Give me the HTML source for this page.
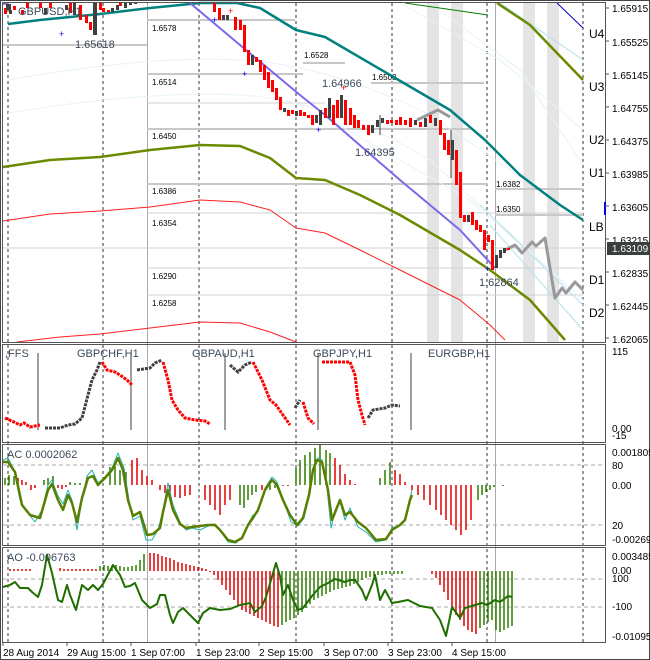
<!DOCTYPE html>
<html><head><meta charset="utf-8"><style>
body{margin:0;background:#fff;width:650px;height:660px;overflow:hidden}
svg{display:block;font-family:"Liberation Sans",sans-serif}
.ax{font-size:10px;fill:#000}
.sm{font-size:8px;fill:#000}
.lb{font-size:11px;fill:#3c4a5a}
</style></head><body>
<svg width="650" height="660" viewBox="0 0 650 660" xmlns="http://www.w3.org/2000/svg">
<rect x="0.5" y="0.5" width="649" height="659" fill="#fff" stroke="#444"/>
<g fill="#e4e4e4">
<rect x="427" y="3" width="12" height="339"/><rect x="451" y="3" width="12" height="339"/>
<rect x="523" y="3" width="12" height="339"/><rect x="547" y="3" width="12" height="339"/>
</g>
<g stroke="#333" stroke-dasharray="3,3" stroke-width="1">
<path d="M8 3V642M103 3V642M199 3V642M296 3V642M392 3V642M487 3V642M583 3V642"/>
</g>
<g stroke="#aaa" stroke-width="1"><path d="M147.5 3V642M495.5 3V642"/></g>
<g stroke="#c8c8c8" stroke-width="2">
<path d="M3 45H147M147 20H295M147 74H303M147 129H470M147 184H488M303 63H345M371 83H484M495 189H583M495 215H583"/>
</g>
<g stroke="#d0d0d0" stroke-width="1"><path d="M147 103H325M147 213H583M147 268H583M147 295H583M3 248H605"/></g>
<g class="sm">
<text x="152" y="31">1.6578</text><text x="152" y="85">1.6514</text><text x="152" y="139">1.6450</text>
<text x="152" y="194">1.6386</text><text x="152" y="226">1.6354</text><text x="152" y="279">1.6290</text>
<text x="152" y="306">1.6258</text><text x="304" y="58">1.6528</text><text x="372" y="80">1.6503</text>
<text x="496" y="187">1.6382</text><text x="496" y="212">1.6350</text>
</g>
<g fill="none" stroke="#e6f3f7" stroke-width="1">
<path d="M8 80Q150 55 240 60T430 115L583 220"/>
<path d="M8 113Q150 90 240 95T430 160L583 300"/>
<path d="M330 120L470 200L583 300"/>
<path d="M400 3L500 60L583 130"/>
<path d="M430 3L520 70L583 165"/>
</g>
<g fill="none" stroke="#b5e0ea" stroke-width="1"><path d="M480 205L583 305M490 225L583 330M500 3L583 60"/></g>
<g fill="none" stroke-linejoin="round">
<path d="M8 24L40 20L100 14L150 8L200 3L237 3L260 8L296 30L325 37L390 75L450 110L485 140L520 175L560 205L583 220" stroke="#008080" stroke-width="2.5"/>
<path d="M3 167L50 160L100 157L150 150L200 145L240 146L270 158L296 178L325 180L360 195L400 215L460 250L490 270L530 300L565 340" stroke="#6b8a00" stroke-width="2.5"/>
<path d="M497 3L530 25L583 80" stroke="#6b8a00" stroke-width="2.5"/>
<path d="M3 221L50 214L100 211L150 207L200 200L240 202L270 210L296 228L325 233L360 250L400 270L460 300L490 325L505 340" stroke="#ff2020" stroke-width="1"/>
<path d="M17 342L60 337L100 334L150 328L200 322L240 323L270 332L296 342" stroke="#ff2020" stroke-width="1"/>
<path d="M405 3L488 15" stroke="#008000" stroke-width="1"/>
<path d="M557 3L583 28" stroke="#0000cc" stroke-width="1"/>
<path d="M190 3L240 45L300 95L325 115L400 180L460 230L495 268" stroke="#7b68ee" stroke-width="2"/>
<path d="M3 4L8 3" stroke="#7b68ee" stroke-width="2"/>
<path d="M417 120L438 110L450 117" stroke="#999" stroke-width="3"/>
<path d="M505 250L515 245L522 253L532 242L536 246L545 238L555 298L562 288L566 293L575 282L583 290" stroke="#999" stroke-width="3"/>
</g>
<g fill="#ff0000">
<rect x="4" y="8" width="3" height="6"/><rect x="13" y="6" width="3" height="4"/><rect x="21" y="10" width="3" height="4"/><rect x="26" y="3" width="3" height="5"/><rect x="39" y="3" width="3" height="5"/><rect x="49" y="3" width="3" height="5"/><rect x="69" y="3" width="3" height="10"/><rect x="79" y="5" width="3" height="15"/><rect x="85" y="15" width="3" height="8"/><rect x="89" y="22" width="3" height="8"/><rect x="99" y="3" width="3" height="7"/><rect x="102" y="8" width="3" height="4"/><rect x="107" y="10" width="3" height="2"/><rect x="119" y="3" width="3" height="3"/>
<rect x="213" y="3" width="3" height="9"/><rect x="218" y="8" width="3" height="12"/><rect x="234" y="17" width="3" height="13"/><rect x="239" y="20" width="3" height="10"/><rect x="243" y="25" width="3" height="27"/><rect x="247" y="50" width="3" height="15"/><rect x="255" y="57" width="3" height="5"/><rect x="259" y="60" width="3" height="12"/><rect x="263" y="65" width="3" height="15"/><rect x="267" y="72" width="3" height="16"/><rect x="271" y="80" width="3" height="12"/><rect x="275" y="88" width="3" height="12"/><rect x="279" y="97" width="3" height="13"/><rect x="287" y="110" width="3" height="6"/><rect x="291" y="110" width="3" height="4"/><rect x="299" y="110" width="3" height="6"/><rect x="303" y="112" width="3" height="4"/><rect x="307" y="115" width="3" height="3"/><rect x="311" y="115" width="3" height="10"/><rect x="324" y="108" width="3" height="10"/><rect x="332" y="105" width="3" height="20"/><rect x="336" y="100" width="3" height="18"/><rect x="344" y="100" width="3" height="25"/><rect x="349" y="108" width="3" height="17"/><rect x="353" y="115" width="3" height="13"/><rect x="357" y="120" width="3" height="8"/><rect x="362" y="125" width="3" height="5"/><rect x="367" y="125" width="3" height="10"/><rect x="386" y="120" width="3" height="4"/><rect x="390" y="120" width="3" height="3"/><rect x="395" y="120" width="3" height="5"/><rect x="399" y="117" width="3" height="8"/><rect x="404" y="120" width="3" height="5"/><rect x="409" y="118" width="3" height="9"/><rect x="419" y="122" width="3" height="5"/><rect x="429" y="115" width="3" height="8"/><rect x="439" y="120" width="3" height="15"/><rect x="443" y="133" width="3" height="17"/><rect x="447" y="140" width="3" height="15"/><rect x="455" y="150" width="3" height="35"/><rect x="459" y="172" width="3" height="46"/><rect x="463" y="215" width="3" height="7"/><rect x="471" y="212" width="3" height="13"/><rect x="475" y="220" width="3" height="10"/><rect x="479" y="225" width="3" height="7"/><rect x="483" y="230" width="3" height="20"/><rect x="487" y="235" width="3" height="7"/><rect x="491" y="240" width="3" height="30"/><rect x="507" y="248" width="3" height="2"/>
</g>
<g fill="#404040">
<rect x="9" y="10" width="3" height="4"/><rect x="44" y="8" width="3" height="6"/><rect x="65" y="5" width="3" height="5"/><rect x="73" y="3" width="3" height="12"/><rect x="93" y="3" width="4" height="32"/><rect x="111" y="8" width="3" height="4"/><rect x="116" y="5" width="3" height="5"/><rect x="124" y="3" width="3" height="5"/><rect x="129" y="2" width="3" height="3"/><rect x="134" y="2" width="3" height="2"/>
<rect x="222" y="15" width="3" height="5"/><rect x="226" y="15" width="3" height="5"/><rect x="251" y="55" width="3" height="10"/><rect x="283" y="108" width="3" height="4"/><rect x="295" y="111" width="3" height="5"/><rect x="315" y="115" width="3" height="8"/><rect x="319" y="110" width="3" height="15"/><rect x="328" y="98" width="3" height="20"/><rect x="340" y="95" width="3" height="23"/><rect x="371" y="125" width="3" height="8"/><rect x="376" y="120" width="3" height="7"/><rect x="381" y="118" width="3" height="5"/><rect x="414" y="120" width="3" height="5"/><rect x="424" y="118" width="3" height="9"/><rect x="434" y="118" width="3" height="8"/><rect x="451" y="140" width="3" height="20"/><rect x="467" y="215" width="3" height="7"/><rect x="495" y="255" width="3" height="13"/><rect x="499" y="250" width="3" height="8"/><rect x="503" y="248" width="3" height="5"/>
<path d="M451 130V178M380 115V135" stroke="#404040"/>
</g>
<g fill="#00f" font-size="9"><text x="485" y="272">+</text><text x="316" y="133">+</text><text x="242" y="77">+</text><text x="212" y="23">+</text><text x="59" y="37">+</text></g>
<g fill="#f00" font-size="9"><text x="341" y="91">+</text><text x="228" y="14">+</text></g>
<text x="75" y="48" font-size="11" fill="#3c4a5a">1.65618</text>
<text x="322" y="87" font-size="11" fill="#3c4a5a">1.64966</text>
<text x="355" y="156" font-size="11" fill="#3c4a5a">1.64395</text>
<text x="479" y="286" font-size="11" fill="#3c4a5a">1.62864</text>
<rect x="6" y="4" width="5" height="6" fill="#404040"/>
<text x="18" y="15" font-size="11" fill="#3c4a5a">GBPUSD,H1</text>
<g font-size="12" fill="#000"><text x="589" y="38">U4</text><text x="589" y="91">U3</text><text x="589" y="144">U2</text><text x="589" y="177">U1</text><text x="589" y="231">LB</text><text x="589" y="284">D1</text><text x="589" y="317">D2</text></g>
<g fill="none" stroke="#555" stroke-width="1">
<rect x="2.5" y="2.5" width="603" height="340"/>
<rect x="2.5" y="344.5" width="603" height="98"/>
<rect x="2.5" y="444.5" width="603" height="101"/>
<rect x="2.5" y="547.5" width="603" height="95"/>
</g>
<rect x="604" y="202" width="2" height="13" fill="#0000ee"/>
<g class="ax">
<text x="612" y="12">1.65915</text><text x="612" y="46">1.65525</text><text x="612" y="79">1.65145</text><text x="612" y="112">1.64755</text><text x="612" y="145">1.64375</text><text x="612" y="178">1.63985</text><text x="612" y="211">1.63605</text><text x="612" y="244">1.63215</text><text x="612" y="277">1.62835</text><text x="612" y="310">1.62445</text><text x="612" y="343">1.62065</text>
</g>
<g stroke="#555"><path d="M605 8h4M605 41h4M605 74h4M605 107h4M605 140h4M605 173h4M605 206h4M605 239h4M605 272h4M605 305h4M605 338h4"/></g>
<rect x="607" y="242" width="43" height="13" fill="#3a3f3f"/>
<text x="612" y="252" font-size="10" fill="#fff">1.63109</text>
<g stroke="#404040" stroke-width="1"><path d="M38 353V430M131 353V430M225 353V430M318 353V430M411 353V430"/></g>
<g class="lb"><text x="5" y="357">,FFS</text><text x="77" y="357">GBPCHF,H1</text><text x="192" y="357">GBPAUD,H1</text><text x="313" y="357">GBPJPY,H1</text><text x="428" y="357">EURGBP,H1</text></g>
<g fill="none" stroke-width="3" stroke-dasharray="3,1">
<path d="M5 418L14 422L20 425L24 423L30 427L40 425" stroke="#ff0000"/>
<path d="M45 428L60 428L68 425L75 424L82 418L88 395L92 380L97 370L100 362" stroke="#404040"/>
<path d="M102 362L107 370L115 372L120 375L127 380L132 385" stroke="#ff0000"/>
<path d="M137 370L150 368L155 363L162 360" stroke="#404040"/>
<path d="M163 362L168 380L172 400L178 410L185 418L195 420L205 421L210 424" stroke="#ff0000"/>
<path d="M230 365L238 372L245 365L252 362" stroke="#404040"/>
<path d="M253 362L262 380L270 400L276 405L283 415L290 425" stroke="#ff0000"/>
<path d="M295 408L300 400" stroke="#404040"/>
<path d="M303 402L308 418L314 424" stroke="#ff0000"/>
<path d="M322 362L350 362L355 375L358 400L362 415L365 425" stroke="#ff0000"/>
<path d="M368 418L373 410L385 408L392 405L400 406" stroke="#404040"/>
</g>
<g class="ax"><text x="612" y="355">115</text><text x="612" y="432">0.00</text><text x="612" y="439">-15</text></g>
<g stroke="#aaa" stroke-dasharray="4,3"><path d="M3 465H605M3 525H605"/></g>
<g stroke-width="1.5">
<path stroke="#2e7d00" d="M5 485V478M9 485V475M14 485V476M44 485V480M48 485V478M53 485V476M110 485V467M115 485V466M120 485V470M126 485V472M70 485V482M75 485V483M80 485V483M110 485V470M296 485V468M300 485V460M305 485V455M310 485V452M315 485V448M320 485V445M326 485V450M330 485V453M240 485V505M244 485V508M248 485V500M252 485V495M256 485V492M270 485V490M275 485V488M283 485V486M380 485V478M385 485V470M390 485V462M478 485V500M482 485V495M486 485V492M490 485V490M494 485V487M499 485V485M503 485V486M508 485V485"/>
<path stroke="#e00000" d="M18 485V478M22 485V480M26 485V482M31 485V490M35 485V488M40 485V485M58 485V488M62 485V489M66 485V487M132 485V460M137 485V458M142 485V470M147 485V476M152 485V480M160 485V490M165 485V493M170 485V495M175 485V497M180 485V498M185 485V496M190 485V495M205 485V500M210 485V505M215 485V510M220 485V515M225 485V505M230 485V500M262 485V490M288 485V486M335 485V458M340 485V465M345 485V474M350 485V480M355 485V484M395 485V470M400 485V474M405 485V482M412 485V490M418 485V495M424 485V500M430 485V505M436 485V510M441 485V515M446 485V520M451 485V525M456 485V530M461 485V535M466 485V530M471 485V520"/>
</g>
<g fill="none" stroke-linejoin="round">
<path stroke="#20b2aa" stroke-width="1" d="M3 460L8 458L14 470L20 500L27 512L35 522L42 510L48 485L52 480L58 496L63 504L68 490L72 500L77 530L82 500L87 476L92 470L98 483L104 478L112 468L118 453L124 468L129 500L133 520L140 516L146 540L152 540L158 530L163 510L168 483L173 505L180 522L186 530L192 528L200 530L208 526L215 524L221 532L228 542L236 543L242 537L248 524L253 515L258 512L265 488L272 477L277 482L284 502L291 522L298 526L304 518L310 492L314 465L318 458L322 460L327 488L331 528L335 510L340 502L345 520L350 508L358 527L366 532L376 542L386 540L392 528L400 525L405 520L410 498L412 490"/>
<path stroke="#5a7f00" stroke-width="2.5" d="M3 462L8 462L15 472L22 505L30 515L40 518L48 490L52 484L58 500L63 510L68 495L72 503L77 522L82 498L88 478L93 476L98 485L105 478L112 470L118 458L123 470L128 500L133 516L140 512L147 535L153 534L160 528L163 512L168 490L173 510L180 524L186 528L192 527L200 526L208 525L215 525L220 530L228 540L235 542L242 538L248 525L253 518L258 510L265 490L272 480L277 485L283 500L290 515L297 525L303 518L309 495L313 470L317 460L322 462L328 490L332 520L336 510L340 500L345 515L350 512L358 522L366 528L376 540L386 539L392 530L400 525L405 520L410 500L412 495"/>
</g>
<text x="7" y="458" class="lb">AC 0.0002062</text>
<g class="ax"><text x="612" y="456">0.001805</text><text x="612" y="469">80</text><text x="612" y="489">0.00</text><text x="612" y="529">20</text><text x="612" y="543">-0.002692</text></g>
<g stroke="#aaa" stroke-dasharray="4,3"><path d="M3 579H605M3 607H605"/></g>
<g stroke-width="1.5">
<path stroke="#e00000" d="M10 571V569M14 571V569M18 571V569M22 571V569M26 571V569M30 571V569M60 571V568M64 571V569M68 571V569M72 571V569M76 571V569M80 571V569M84 571V569M88 571V569M92 571V569M96 571V569M150 571V553M154 571V553M158 571V554M162 571V556M166 571V557M170 571V558M174 571V560M178 571V562M182 571V563M186 571V564M190 571V565M194 571V566M198 571V567M202 571V568M206 571V569M210 571V572M214 571V575M218 571V580M222 571V585M226 571V590M230 571V595M234 571V600M238 571V605M242 571V610M246 571V612M250 571V614M254 571V616M258 571V618M262 571V620M266 571V622M270 571V624M274 571V626M278 571V627M432 571V574M436 571V578M440 571V585M444 571V592M448 571V600M452 571V610M456 571V615M460 571V620M464 571V626M468 571V630M472 571V632M476 571V634"/>
<path stroke="#2e7d00" d="M100 571V566M104 571V565M108 571V566M112 571V566M116 571V565M120 571V566M124 571V567M128 571V567M132 571V566M136 571V565M140 571V560M144 571V554M282 571V625M286 571V622M290 571V620M294 571V618M298 571V615M302 571V612M306 571V608M310 571V604M314 571V600M318 571V598M322 571V596M326 571V594M330 571V592M334 571V590M338 571V589M342 571V588M346 571V587M350 571V586M354 571V584M358 571V582M362 571V580M366 571V578M370 571V577M374 571V576M378 571V575M382 571V575M386 571V574M390 571V574M394 571V574M398 571V574M402 571V574M480 571V628M484 571V625M488 571V622M492 571V620M496 571V630M500 571V632M504 571V630M508 571V628M512 571V626"/>
</g>
<path fill="none" stroke="#1e6e00" stroke-width="2" stroke-linejoin="round" d="M3 587L10 585L15 582L20 588L28 588L32 592L38 597L42 585L47 555L52 573L58 600L62 602L67 585L70 595L76 610L82 585L88 590L93 585L98 590L103 584L113 565L120 575L125 587L130 586L135 583L142 600L150 608L157 604L160 595L165 595L170 615L173 623L178 612L183 608L190 615L198 623L203 613L210 608L220 610L230 609L240 605L250 603L255 612L262 606L266 597L271 580L276 563L280 576L283 595L288 585L293 600L298 610L303 608L312 596L320 587L328 583L335 579L345 582L350 580L355 580L362 590L366 600L372 585L375 575L380 600L385 590L392 603L398 602L408 600L420 606L432 608L440 620L446 636L452 607L460 618L465 608L475 605L482 603L487 605L495 600L500 602L508 596L512 597"/>
<text x="7" y="561" class="lb">AO -0.006763</text>
<g class="ax"><text x="612" y="560">0.003485</text><text x="612" y="574">0.00</text><text x="612" y="582">100</text><text x="612" y="610">-100</text><text x="612" y="640">-0.010955</text></g>
<g class="ax"><text x="3" y="656">28 Aug 2014</text><text x="67" y="656">29 Aug 15:00</text><text x="131" y="656">1 Sep 07:00</text><text x="196" y="656">1 Sep 23:00</text><text x="259" y="656">2 Sep 15:00</text><text x="324" y="656">3 Sep 07:00</text><text x="388" y="656">3 Sep 23:00</text><text x="452" y="656">4 Sep 15:00</text></g>
<g stroke="#555"><path d="M3 643v3M67 643v3M131 643v3M196 643v3M259 643v3M324 643v3M388 643v3M452 643v3"/></g>
</svg>
</body></html>
